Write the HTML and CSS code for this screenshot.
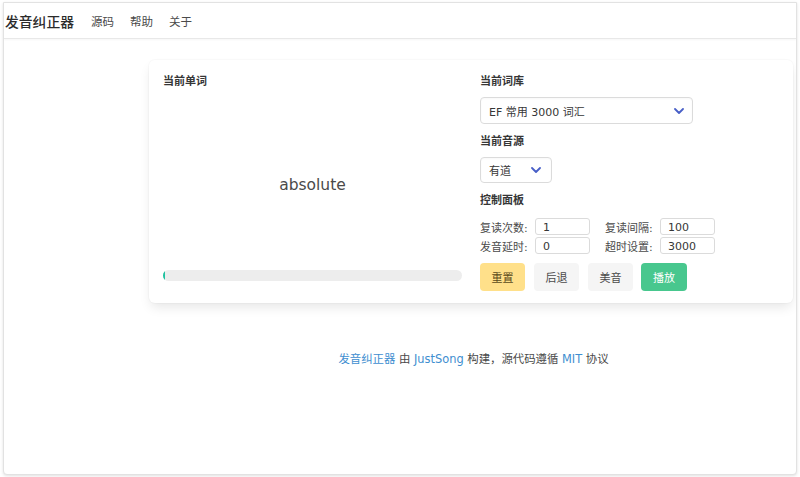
FILE: index.html
```html
<!DOCTYPE html>
<html lang="zh">
<head>
<meta charset="utf-8">
<title>发音纠正器</title>
<link rel="stylesheet" href="styles.css">
</head>
<body>
<div class="window">
  <nav class="navbar">
    <span class="brand">发音纠正器</span>
    <a class="nav-link">源码</a>
    <a class="nav-link">帮助</a>
    <a class="nav-link">关于</a>
  </nav>
  <main class="main">
    <section class="card">
      <div class="col-left">
        <div class="heading">当前单词</div>
        <div class="word-area"><span class="word">absolute</span></div>
        <div class="progress"><div class="progress-fill"></div></div>
      </div>
      <div class="col-right">
        <div class="heading">当前词库</div>
        <div class="select select-wide">
          <span>EF 常用 3000 词汇</span>
          <svg class="chev" width="10" height="6" viewBox="0 0 10 6"><path d="M1 1 L5 5 L9 1" fill="none" stroke="#485fc7" stroke-width="1.8" stroke-linecap="round" stroke-linejoin="round"/></svg>
        </div>
        <div class="heading gap-top">当前音源</div>
        <div class="select select-narrow">
          <span>有道</span>
          <svg class="chev" width="10" height="6" viewBox="0 0 10 6"><path d="M1 1 L5 5 L9 1" fill="none" stroke="#485fc7" stroke-width="1.8" stroke-linecap="round" stroke-linejoin="round"/></svg>
        </div>
        <div class="heading gap-top">控制面板</div>
        <div class="controls">
          <label class="lbl">复读次数:</label><div class="inp">1</div>
          <label class="lbl lbl-second">复读间隔:</label><div class="inp">100</div>
          <label class="lbl">发音延时:</label><div class="inp">0</div>
          <label class="lbl lbl-second">超时设置:</label><div class="inp">3000</div>
        </div>
        <div class="buttons">
          <button class="btn btn-warning">重置</button>
          <button class="btn btn-light">后退</button>
          <button class="btn btn-light">美音</button>
          <button class="btn btn-success">播放</button>
        </div>
      </div>
    </section>
    <footer class="footer">
      <a class="link">发音纠正器</a> 由 <a class="link">JustSong</a> 构建，源代码遵循 <a class="link">MIT</a> 协议
    </footer>
  </main>
</div>
</body>
</html>
```

FILE: styles.css
```css
* { box-sizing: border-box; }
html, body { margin: 0; padding: 0; background: #fff; }
body {
  font-family: "DejaVu Sans", "Noto Sans CJK SC", sans-serif;
  color: #4a4a4a;
  width: 800px;
  height: 477px;
  overflow: hidden;
}
.window {
  margin: 2px 3px 0 3px;
  height: 473px;
  border: 1px solid #e2e2e2;
  border-radius: 0 0 4px 4px;
  box-shadow: 0 1px 3px rgba(0,0,0,0.12);
  overflow: hidden;
  background: #fff;
}
.navbar {
  height: 36px;
  display: flex;
  align-items: center;
  border-bottom: 1px solid #e8e8e8;
  box-shadow: 0 1px 2px rgba(0,0,0,0.04);
  padding-left: 1px;
}
.brand {
  font-size: 13.8px;
  font-weight: 500;
  color: #2b2b2b;
  margin-right: 9px;
}
.nav-link {
  font-size: 11.5px;
  color: #4a4a4a;
  padding: 0 8px;
}
.main { padding-top: 21px; }
.card {
  margin-left: 145px;
  width: 644px;
  background: #fff;
  border-radius: 6px;
  box-shadow: 0 6px 12px -2px rgba(10,10,10,0.10), 0 0 0 1px rgba(10,10,10,0.02);
  padding: 16px 14px 12px 14px;
  display: flex;
  gap: 18px;
}
.col-left {
  width: 299px;
  display: flex;
  flex-direction: column;
}
.col-right {
  flex: 1;
  display: flex;
  flex-direction: column;
}
.heading {
  font-size: 11px;
  font-weight: 700;
  color: #363636;
  line-height: 12px;
  height: 12px;
}
.gap-top { margin-top: 12px; }
.word-area {
  flex: 1;
  display: flex;
  align-items: center;
  justify-content: center;
  padding-top: 12px;
}
.word {
  font-size: 15.5px;
  color: #4a4a4a;
}
.progress {
  height: 11px;
  border-radius: 6px;
  background: #ededed;
  margin-bottom: 10px;
  overflow: hidden;
}
.progress-fill {
  width: 2px;
  height: 100%;
  background: #1fc2a0;
}
.select {
  margin-top: 9px;
  height: 27px;
  border: 1px solid #dbdbdb;
  border-radius: 4px;
  box-shadow: inset 0 1px 2px rgba(10,10,10,0.03);
  display: flex;
  align-items: center;
  justify-content: space-between;
  padding: 0 8px 0 8px;
  font-size: 11px;
  color: #363636;
}
.select-wide { width: 213px; }
.select-narrow { width: 72px; height: 26px; padding-right: 10px; }
.chev { display: block; }
.controls {
  margin-top: 11px;
  display: grid;
  grid-template-columns: 55px 55px 70px 55px;
  grid-template-rows: 17px 17px;
  row-gap: 2px;
  align-items: center;
}
.lbl {
  font-size: 11px;
  color: #4a4a4a;
  white-space: nowrap;
}
.lbl-second { padding-left: 15px; }
.inp {
  height: 17px;
  border: 1px solid #dbdbdb;
  border-radius: 3px;
  font-size: 11px;
  color: #363636;
  padding: 2px 0 0 7px;
  line-height: 13px;
}
.buttons {
  margin-top: 9px;
  display: flex;
  gap: 9px;
}
.btn {
  width: 45px;
  height: 28px;
  border: none;
  border-radius: 4px;
  font-family: "DejaVu Sans", "Noto Sans CJK SC", sans-serif;
  font-size: 11px;
  padding: 0;
}
.btn-warning { background: #ffe08a; color: #5a4a1a; }
.btn-light { background: #f5f5f5; color: #4a4a4a; }
.btn-success { background: #48c78e; color: #fff; width: 46px; margin-left: -1px; }
.footer {
  text-align: center;
  margin-top: 47px;
  font-size: 11.4px;
  color: #4a4a4a;
  padding-left: 145px;
  width: 794px;
}
.link { color: #3e8ed0; }
```
